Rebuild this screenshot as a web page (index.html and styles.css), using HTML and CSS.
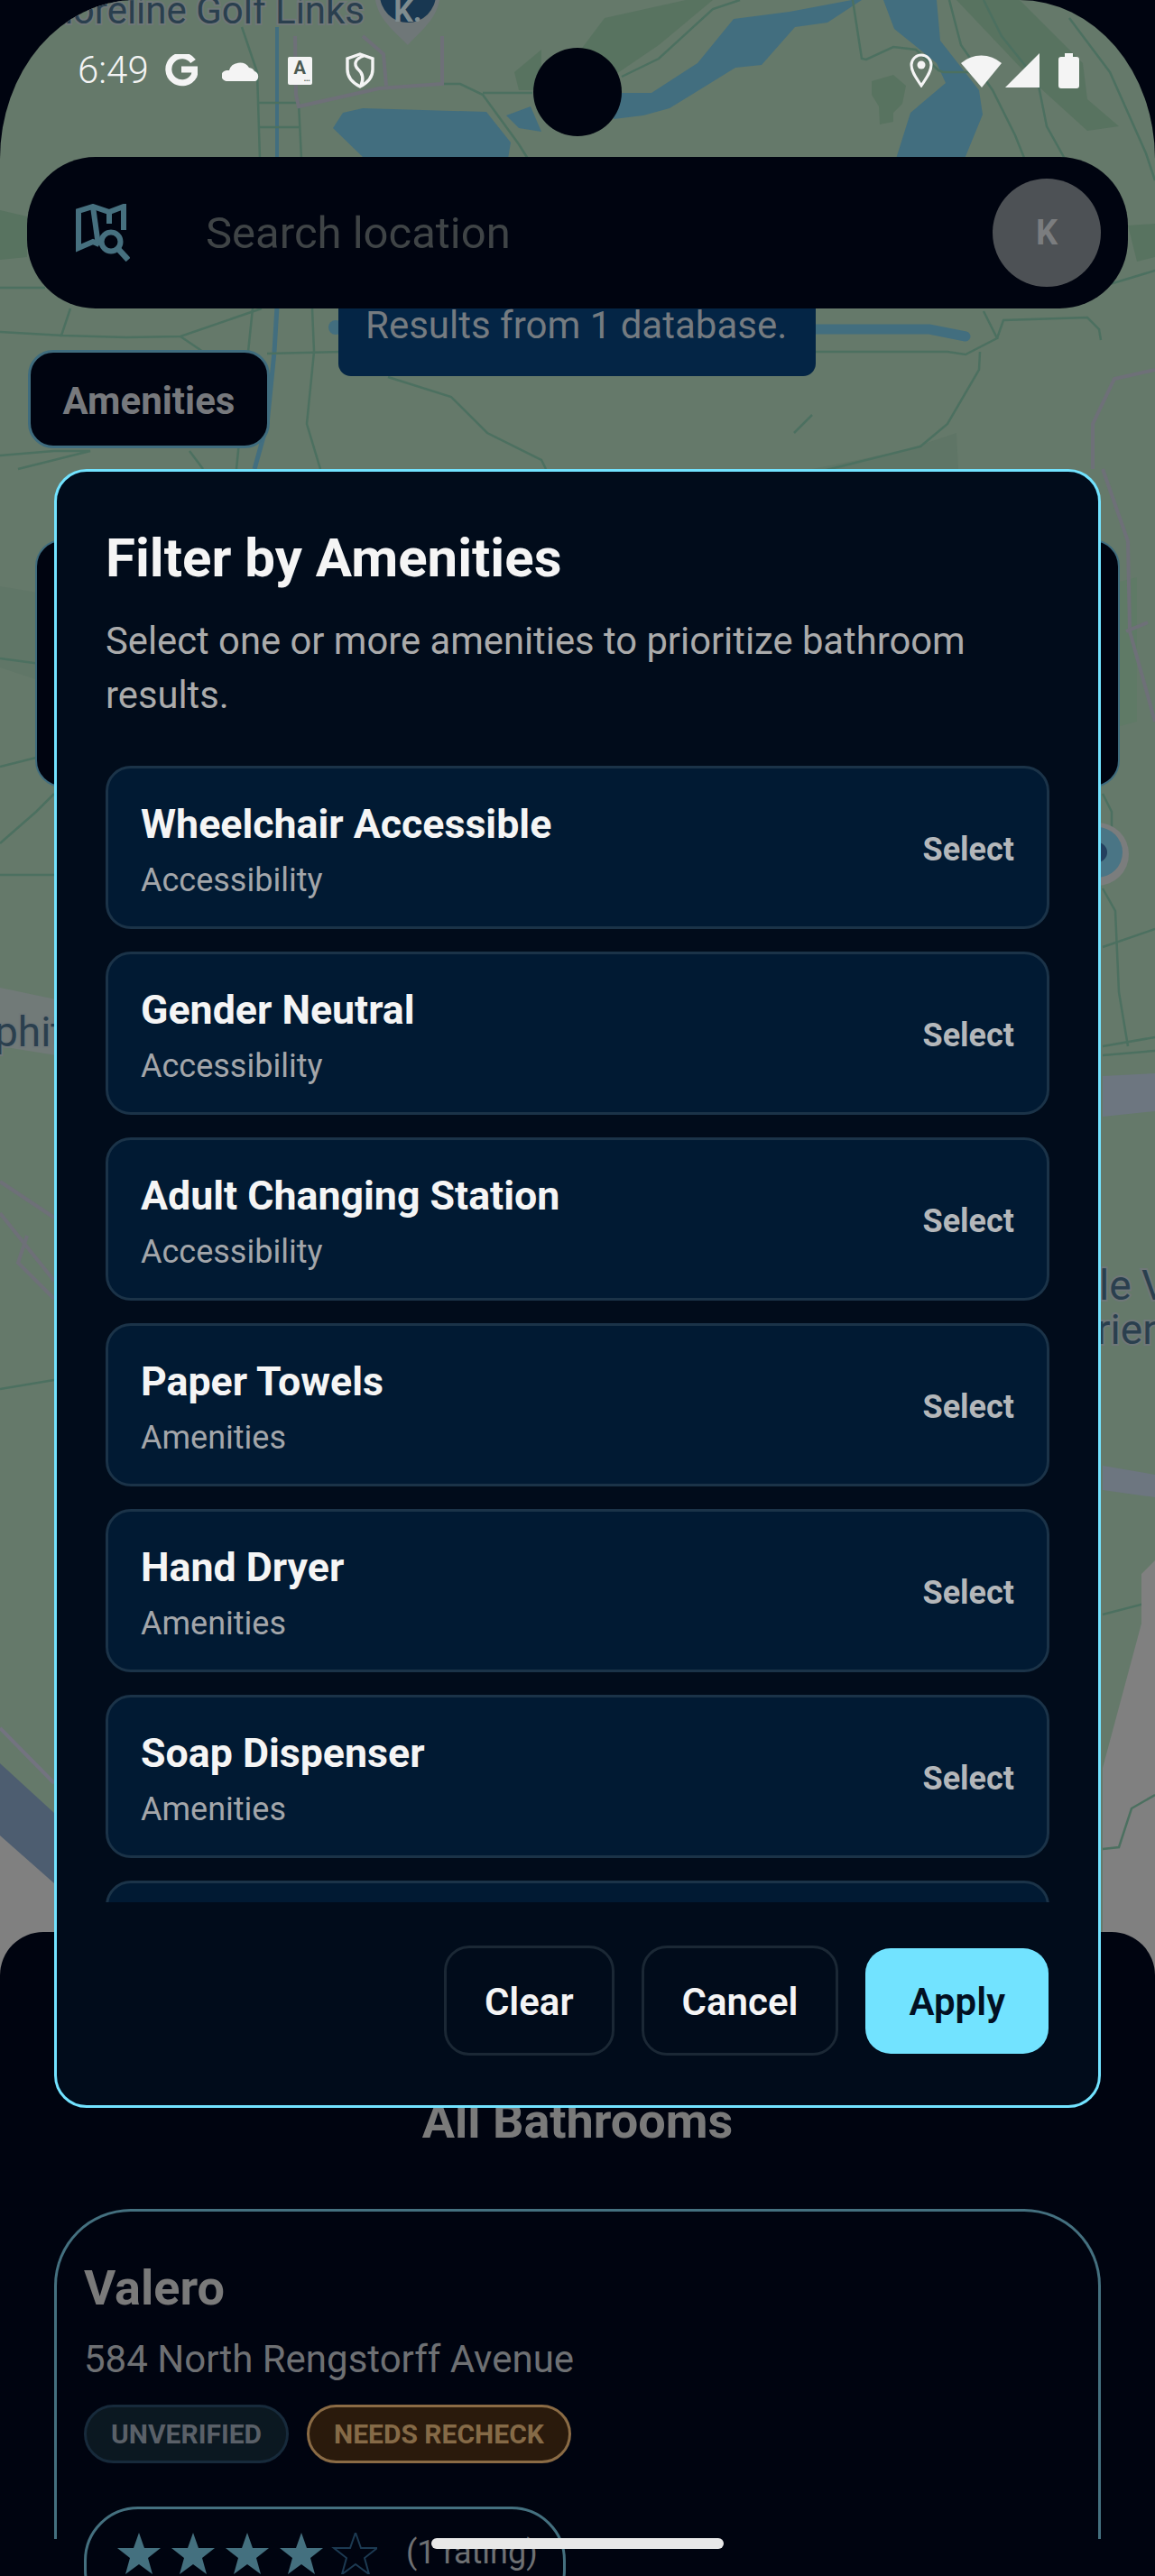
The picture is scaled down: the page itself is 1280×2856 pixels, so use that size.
FILE: index.html
```html
<!DOCTYPE html>
<html lang="en">
<head>
  <meta charset="UTF-8" />
  <meta name="viewport" content="width=device-width, initial-scale=1" />
  <title>Filter by Amenities</title>
  <link rel="stylesheet" href="styles.css">
</head>
<body>

<div class="screen">

  <!-- Map backdrop, already dimmed by the modal -->
  <svg class="map" viewBox="0 0 1280 2190" width="1280" height="2190">
    <rect width="1280" height="2190" fill="#65796a"/>
    <!-- parks -->
    <path d="M640 60 L670 20 L760 0 L790 0 L730 50 L680 84 Z" fill="#587360"/>
    <path d="M1060 0 L1130 0 L1200 70 L1205 110 L1240 140 L1205 145 L1150 95 Z" fill="#587360"/>
    <path d="M966 90 L990 83 L1004 95 L1000 115 L990 125 L990 135 L975 138 L974 118 L966 105 Z" fill="#587360"/>
    <path d="M570 80 L600 55 L600 100 L575 100 Z" fill="#587360"/>
    <path d="M0 233 L30 240 L30 285 L0 288 Z" fill="#587360"/>
    <path d="M1250 250 L1280 248 L1280 285 L1260 290 Z" fill="#587360"/>
    <path d="M900 520 L1000 500 L1060 480 L1062 520 Z" fill="#5f7566"/>
    <path d="M0 650 L60 660 L60 760 L0 740 Z" fill="#607667"/>
    <path d="M1222 650 L1260 640 L1260 800 L1222 810 Z" fill="#5f7a66"/>
    <!-- water -->
    <g fill="#426e7f">
      <path d="M369 142 L380 125 L402 120 L539 124 L566 158 L563 176 L404 176 Z"/>
      <path d="M561 128 L588 118 L600 146 L575 142 Z"/>
      <path d="M680 103 L722 103 L773 70 L813 21 L875 13 L944 0 L955 0 L917 25 L881 30 L844 72 L815 75 L742 120 L713 128 L680 132 Z"/>
      <path d="M979 0 L1038 0 L1042 45 L1085 100 L1089 127 L1069 176 L993 176 L1009 125 L1048 92 L1038 70 L991 32 Z"/>
    </g>
    <path d="M900 365 L1030 365 L1070 373" fill="none" stroke="#426e7f" stroke-width="11" stroke-linecap="round"/>
    <path d="M307 30 L307 176" fill="none" stroke="#426e7f" stroke-width="4"/>
    <path d="M307 340 L304 390 L296 470 L282 520" fill="none" stroke="#426e7f" stroke-width="5"/>
    <circle cx="372" cy="363" r="8" fill="#426e7f"/>
    <!-- local roads -->
    <g fill="none" stroke="#4c7060" stroke-width="2.5">
      <path d="M268 30 L285 80 L288 176"/>
      <path d="M285 114 L331 114 L334 176"/>
      <path d="M288 141 L331 141"/>
      <path d="M490 93 L510 93 L535 105 L575 160 L585 176"/>
      <path d="M535 103 L590 103"/>
      <path d="M689 85 L730 65 L790 10 L820 0"/>
      <path d="M945 0 L955 65 L960 66 L990 52 L1015 55 L1040 78 L1045 80 L1075 80"/>
      <path d="M1052 0 L1065 50 L1100 100 L1125 150 L1135 175"/>
      <path d="M1090 0 L1110 40 L1150 90 L1160 140 L1180 176"/>
      <path d="M1185 20 L1230 80 L1270 170 L1280 200"/>
      <path d="M0 319 L50 319"/>
      <path d="M0 368 L70 372 L140 374 L200 373 L290 342"/>
      <path d="M78 342 L68 372 L66 372"/>
      <path d="M200 373 L225 390"/>
      <path d="M346 342 L348 390 L340 470 L355 520"/>
      <path d="M280 342 L275 390 L262 520"/>
      <path d="M296 392 L380 390"/>
      <path d="M904 390 L1050 390 L1070 393 L1105 375 L1090 345"/>
      <path d="M1105 375 L1112 355 L1205 352 L1218 365 L1220 377"/>
      <path d="M1230 315 L1280 300"/>
      <path d="M1086 390 L1085 410 L1050 470 L1020 495 L900 525"/>
      <path d="M900 460 L880 480"/>
      <path d="M430 418 L500 440 L540 480 L600 510 L605 520"/>
      <path d="M0 505 L60 500 L100 500 L20 520"/>
      <path d="M210 500 L225 520"/>
      <path d="M0 730 L60 738"/>
      <path d="M0 850 L60 835"/>
      <path d="M0 935 L40 900 L60 880"/>
      <path d="M0 970 L60 970"/>
      <path d="M1222 880 L1232 900 L1232 950"/>
      <path d="M1222 985 L1236 1010 L1240 1100 L1250 1160"/>
      <path d="M1222 1160 L1280 1150"/>
      <path d="M1222 1170 L1280 1165"/>
      <path d="M1222 1050 L1280 1030"/>
      <path d="M0 1540 L60 1530"/>
      <path d="M1222 1790 L1280 1775"/>
    </g>
    <!-- arterial roads -->
    <g fill="none" stroke="#6e7078" stroke-width="4">
      <path d="M327 40 L328 105 L331 118 L420 98 L490 93 L490 40"/>
      <path d="M402 40 L425 60 L428 95"/>
      <path d="M1211 520 L1211 470 L1235 420 L1280 410"/>
      <path d="M1222 520 L1250 600 L1252 700 L1280 800"/>
      <path d="M1248 700 L1272 690"/>
      <path d="M0 1310 L60 1350"/>
      <path d="M0 1345 L60 1420"/>
      <path d="M60 1440 L20 1400 L30 1370"/>
    </g>
    <!-- grey freeway bands -->
    <path d="M1222 1193 L1280 1190 L1280 1232 L1222 1238 Z" fill="#6d7680"/>
    <path d="M1222 1625 L1280 1635 L1280 1660 L1222 1652 Z" fill="#6d7680"/>
    <path d="M0 1095 L62 1108 L62 1170 L0 1160 Z" fill="#717a78"/>
    <!-- industrial ground in the corners -->
    <path d="M0 2000 L60 2060 L60 2190 L0 2190 Z" fill="#808080"/>
    <path d="M1222 1960 L1265 1800 L1265 1745 L1280 1730 L1280 2190 L1222 2190 Z" fill="#808080"/>
    <path d="M0 1955 L60 2010 L60 2088 L0 2035 Z" fill="#4d5d70"/>
    <path d="M0 1916 L60 1977" fill="none" stroke="#737380" stroke-width="4"/>
    <path d="M1222 2050 L1240 2048 L1254 2005 L1280 1990" fill="none" stroke="#4c7060" stroke-width="2.5"/>
    <!-- golf pin -->
    <path d="M415 -10 A37 37 0 0 1 488 -10 C488 20 465 35 452 50 C438 35 415 20 415 -10 Z" fill="#6f7778"/>
    <circle cx="452" cy="-6" r="31" fill="#183751"/>
    <text class="map-pin-text" x="452" y="24" text-anchor="middle">K.</text>
    <!-- blue marker at the dialog edge -->
    <circle cx="1216" cy="947" r="35" fill="#7b7d7d"/>
    <circle cx="1216" cy="945" r="28" fill="#4a7585"/>
    <circle cx="1216" cy="945" r="11" fill="#24405e"/>
    <!-- place labels -->
    <text class="map-label map-label-golf" x="404" y="26" text-anchor="end">Shoreline Golf Links</text>
    <text class="map-label" x="-6" y="1160">phit</text>
    <text class="map-label" x="1218" y="1441">le V</text>
    <text class="map-label" x="1215" y="1490">rien</text>
  </svg>

  <div class="map-stage">
    <header class="statusbar">
      <div class="status-group">
        <span class="clock">6:49</span>
        <svg class="ico-g" viewBox="0 0 37 36" width="37" height="36">
          <path d="M32 8 A15 15 0 1 0 33 24 L35 17 L19 17" fill="none" stroke="#f4f4f4" stroke-width="7"/>
        </svg>
        <svg class="ico-cloud" viewBox="0 0 42 23" width="42" height="23">
          <path d="M6 23 A6 6 0 0 1 5 11 L8 11 A12 11 0 0 1 30 8 A8 7 0 0 1 36 12 A6 6 0 0 1 37 23 Z" fill="#f4f4f4"/>
        </svg>
        <span class="ico-card">
          <span class="ico-card-letter">A</span>
          <span class="ico-card-dots">•••</span>
        </span>
        <svg class="ico-shield" viewBox="0 0 32 40" width="32" height="40">
          <path d="M16 2 L30 7 L30 19 C30 28 24 34 16 38 C8 34 2 28 2 19 L2 7 Z" fill="none" stroke="#f4f4f4" stroke-width="3.4"/>
          <path d="M20 4 C11 7 8 13 14 19 C20 24 20 30 17 37" fill="none" stroke="#f4f4f4" stroke-width="3.4"/>
        </svg>
      </div>
      <div class="status-group status-right">
        <svg class="ico-pin" viewBox="0 0 26 38" width="26" height="38">
          <path d="M13 36 C8 28 2 21 2 13 A11 11 0 0 1 24 13 C24 21 18 28 13 36 Z" fill="none" stroke="#f4f4f4" stroke-width="3"/>
          <circle cx="13" cy="13" r="4.5" fill="#f4f4f4"/>
        </svg>
        <svg class="ico-wifi" viewBox="0 0 45 37" width="45" height="37">
          <path d="M0 10 A34 34 0 0 1 45 10 L23 37 Z" fill="#f4f4f4"/>
        </svg>
        <svg class="ico-signal" viewBox="0 0 38 38" width="38" height="38">
          <path d="M38 0 L38 38 L0 38 Z" fill="#f4f4f4"/>
        </svg>
        <svg class="ico-battery" viewBox="0 0 23 39" width="23" height="39">
          <path d="M7 0 H16 V4 H20 A3 3 0 0 1 23 7 V36 A3 3 0 0 1 20 39 H3 A3 3 0 0 1 0 36 V7 A3 3 0 0 1 3 4 H7 Z" fill="#f4f4f4"/>
        </svg>
      </div>
    </header>

    <div class="camera"></div>

    <div class="results-toast">Results from 1 database.</div>

    <div class="searchbar">
      <svg class="search-icon" viewBox="0 0 60 64" width="60" height="64">
        <g fill="none" stroke="#46707f" stroke-width="6">
          <path d="M26 45 L19 42 L3 49 L3 8 L19 3 L37 9 L53 3 L53 29"/>
          <path d="M19 3 L25 46"/>
          <path d="M37 9 L37 22"/>
          <circle cx="39" cy="42" r="10.5"/>
          <path d="M47 50 L58 62" stroke-width="6.5"/>
        </g>
      </svg>
      <span class="search-placeholder">Search location</span>
      <div class="avatar">K</div>
    </div>

    <button class="filter-chip">Amenities</button>

    <div class="hidden-card"></div>
  </div>

  <section class="sheet">
    <h2 class="sheet-title">All Bathrooms</h2>
    <article class="place-card">
      <h3 class="place-name">Valero</h3>
      <p class="place-address">584 North Rengstorff Avenue</p>
      <div class="badges">
        <span class="badge badge-muted">UNVERIFIED</span>
        <span class="badge badge-warn">NEEDS RECHECK</span>
      </div>
      <div class="rating">
        <svg class="stars" viewBox="0 0 288 46" width="288" height="46">
          <defs>
            <polygon id="star" points="24,0 30,17 48,17 34,28 39,46 24,35 9,46 14,28 0,17 18,17"/>
          </defs>
          <use href="#star" fill="#44707f"/>
          <use href="#star" x="60" fill="#44707f"/>
          <use href="#star" x="120" fill="#44707f"/>
          <use href="#star" x="180" fill="#44707f"/>
          <use href="#star" x="240" fill="none" stroke="#1c3a52" stroke-width="2"/>
        </svg>
        <span class="rating-count">(1 rating)</span>
      </div>
    </article>
  </section>

  <!-- Amenities modal -->
  <div class="dialog">
    <h1 class="dialog-title">Filter by Amenities</h1>
    <p class="dialog-desc">Select one or more amenities to prioritize bathroom results.</p>
    <div class="amenity-list">
      <div class="amenity">
        <div class="amenity-info"><div class="amenity-name">Wheelchair Accessible</div><div class="amenity-group">Accessibility</div></div>
        <span class="amenity-action">Select</span>
      </div>
      <div class="amenity">
        <div class="amenity-info"><div class="amenity-name">Gender Neutral</div><div class="amenity-group">Accessibility</div></div>
        <span class="amenity-action">Select</span>
      </div>
      <div class="amenity">
        <div class="amenity-info"><div class="amenity-name">Adult Changing Station</div><div class="amenity-group">Accessibility</div></div>
        <span class="amenity-action">Select</span>
      </div>
      <div class="amenity">
        <div class="amenity-info"><div class="amenity-name">Paper Towels</div><div class="amenity-group">Amenities</div></div>
        <span class="amenity-action">Select</span>
      </div>
      <div class="amenity">
        <div class="amenity-info"><div class="amenity-name">Hand Dryer</div><div class="amenity-group">Amenities</div></div>
        <span class="amenity-action">Select</span>
      </div>
      <div class="amenity">
        <div class="amenity-info"><div class="amenity-name">Soap Dispenser</div><div class="amenity-group">Amenities</div></div>
        <span class="amenity-action">Select</span>
      </div>
      <div class="amenity"></div>
    </div>
    <div class="dialog-actions">
      <button class="btn">Clear</button>
      <button class="btn">Cancel</button>
      <button class="btn btn-primary">Apply</button>
    </div>
  </div>

  <div class="home-indicator"></div>
</div>

</body>
</html>
```

FILE: styles.css
```css
* {
  box-sizing: border-box;
}
body {
  margin: 0;
  background: #000410;
  font-family: Roboto, "Noto Sans", sans-serif;
}
button {
  font-family: inherit;
}

.screen {
  position: relative;
  width: 1280px;
  height: 2856px;
  overflow: hidden;
  background: #000410;
}

/* Map */
.map {
  position: absolute;
  top: 0;
  left: 0;
  border-radius: 150px 150px 0 0 / 176px 176px 0 0;
}
.map-label {
  font-size: 46px;
  font-weight: 400;
  fill: #2a3f4e;
  stroke: #6f7778;
  stroke-width: 4px;
  paint-order: stroke;
}
.map-label-golf {
  font-size: 42px;
}
.map-pin-text {
  font-size: 34px;
  font-weight: 700;
  fill: #7f8c8f;
}

.map-stage {
  position: relative;
  height: 2190px;
}

/* Status bar */
.statusbar {
  display: flex;
  justify-content: space-between;
  height: 174px;
  padding: 58px 84px 0 86px;
}
.status-group {
  display: flex;
  align-items: center;
  height: 40px;
}
.clock {
  font-size: 42px;
  font-weight: 300;
  line-height: 40px;
  color: #f4f4f4;
  margin-right: 17px;
}
.ico-g {
  margin-right: 27px;
}
.ico-cloud {
  margin-right: 31px;
}
.ico-card {
  position: relative;
  width: 27px;
  height: 31px;
  margin-right: 37px;
  background: #f4f4f4;
  border-radius: 2px;
  text-align: center;
}
.ico-card-letter {
  display: block;
  font-size: 20px;
  font-weight: 700;
  line-height: 24px;
  color: #4c5a52;
}
.ico-card-dots {
  position: absolute;
  right: 2px;
  bottom: 0;
  font-size: 7px;
  line-height: 8px;
  color: #4c5a52;
}
.status-right .ico-pin {
  margin-right: 31px;
}
.status-right .ico-wifi {
  margin-right: 4px;
}
.status-right .ico-signal {
  margin-right: 21px;
}

.camera {
  position: absolute;
  top: 53px;
  left: 591px;
  width: 98px;
  height: 98px;
  border-radius: 50%;
  background: #000410;
}

/* Search */
.searchbar {
  position: relative;
  display: flex;
  align-items: center;
  height: 168px;
  margin: 0 30px;
  padding: 0 30px 0 54px;
  background: #000410;
  border-radius: 76px;
}
.search-icon {
  flex: none;
}
.search-placeholder {
  flex: 1;
  margin-left: 84px;
  font-size: 49px;
  color: #3f4446;
}
.avatar {
  display: flex;
  align-items: center;
  justify-content: center;
  width: 120px;
  height: 120px;
  border-radius: 50%;
  background: #4d5155;
  color: #7b7d7f;
  font-size: 38px;
  font-weight: 700;
}

.results-toast {
  position: absolute;
  top: 317px;
  left: 375px;
  width: 529px;
  height: 100px;
  padding: 18px 0 0 30px;
  background: #042545;
  border-radius: 14px;
  color: #757b80;
  font-size: 42px;
  line-height: 52px;
}

.filter-chip {
  display: block;
  position: relative;
  width: 268px;
  height: 109px;
  margin: 46px 0 0 31px;
  padding: 4px 0 0;
  background: #000410;
  border: 3px solid #3f6c7e;
  border-radius: 28px;
  color: #77797d;
  font-size: 42px;
  font-weight: 700;
}

.hidden-card {
  height: 275px;
  margin: 101px 39px 0 39px;
  background: #000410;
  border: 2px solid #3f6c7e;
  border-radius: 30px;
}

/* Bottom sheet */
.sheet {
  position: relative;
  margin-top: -48px;
  padding-top: 180px;
  height: 714px;
  background: #000410;
  border-radius: 48px 48px 0 0;
}
.sheet-title {
  margin: 0 0 67px;
  font-size: 54px;
  font-weight: 700;
  line-height: 60px;
  text-align: center;
  color: #7a7a7a;
}
.place-card {
  height: 366px;
  margin: 0 60px;
  padding: 53px 30px 0;
  border: 3px solid #44707f;
  border-bottom: 0;
  border-radius: 85px 85px 0 0;
}
.place-name {
  margin: 0 0 22px;
  font-size: 54px;
  font-weight: 700;
  line-height: 64px;
  color: #7a7a7a;
}
.place-address {
  margin: 0 0 25px;
  font-size: 42px;
  line-height: 50px;
  color: #6e7073;
}
.badges {
  display: flex;
  gap: 20px;
  margin-bottom: 48px;
}
.badge {
  display: flex;
  align-items: center;
  height: 65px;
  padding: 0 27px;
  border: 3px solid;
  border-radius: 33px;
  font-size: 30px;
  font-weight: 700;
}
.badge-muted {
  background: #0b1821;
  border-color: #172a3b;
  color: #5a6068;
}
.badge-warn {
  background: #2a1a0c;
  border-color: #8a6b45;
  color: #856a47;
}
.rating {
  display: flex;
  align-items: flex-start;
  width: 534px;
  height: 130px;
  padding: 26px 0 0 34px;
  border: 3px solid #44707f;
  border-radius: 60px;
}
.stars {
  flex: none;
}
.rating-count {
  margin-left: 32px;
  font-size: 36px;
  line-height: 44px;
  color: #6e7073;
}

/* Dialog */
.dialog {
  position: absolute;
  top: 520px;
  left: 60px;
  display: flex;
  flex-direction: column;
  width: 1160px;
  height: 1817px;
  padding: 63px 54px 55px;
  background: #010c1b;
  border: 3px solid #72e3ff;
  border-radius: 36px;
}
.dialog-title {
  margin: 0 0 29px;
  font-size: 60px;
  font-weight: 700;
  line-height: 66px;
  color: #f5f5f5;
}
.dialog-desc {
  margin: 0 0 48px;
  font-size: 41.75px;
  line-height: 60px;
  color: #ababab;
}
.amenity-list {
  display: flex;
  flex-direction: column;
  gap: 25px;
  height: 1260px;
  overflow: hidden;
}
.amenity {
  display: flex;
  flex: none;
  align-items: center;
  justify-content: space-between;
  height: 181px;
  padding: 4px 36px 0;
  background: #011a33;
  border: 3px solid #1b3348;
  border-radius: 28px;
}
.amenity-info {
  padding-top: 3px;
}
.amenity-name {
  font-size: 44.7px;
  font-weight: 700;
  line-height: 52px;
  color: #f5f5f5;
}
.amenity-group {
  margin-top: 14px;
  font-size: 36px;
  line-height: 44px;
  color: #a3a6aa;
}
.amenity-action {
  font-size: 36px;
  font-weight: 700;
  color: #b4b7ba;
}
.dialog-actions {
  display: flex;
  align-items: center;
  justify-content: flex-end;
  gap: 30px;
  margin-top: 48px;
  padding-right: 1px;
}
.btn {
  height: 122px;
  padding: 3px 42px 0;
  background: transparent;
  border: 3px solid #1b2835;
  border-radius: 28px;
  color: #f5f5f5;
  font-size: 42px;
  font-weight: 600;
}
.btn-primary {
  height: 117px;
  padding: 3px 48px 0;
  background: #72e3ff;
  border: 0;
  color: #021022;
}

.home-indicator {
  position: absolute;
  top: 2814px;
  left: 478px;
  width: 324px;
  height: 12px;
  background: #e8e8e8;
  border-radius: 6px;
}
```
